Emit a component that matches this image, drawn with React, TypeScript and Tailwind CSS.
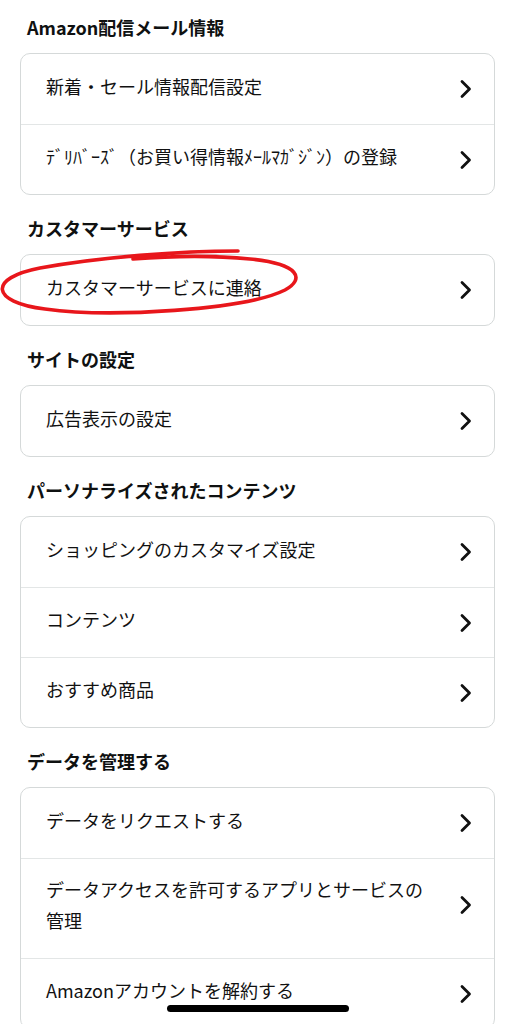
import React from "react";

const font = {
  fontFamily: '"Noto Sans CJK JP", "Noto Sans", sans-serif',
};

function Chevron() {
  return (
    <svg width="14" height="20" viewBox="0 0 14 20" className="shrink-0">
      <path d="M3 2.5 L10.5 10 L3 17.5" fill="none" stroke="#111" strokeWidth="2.8" strokeLinecap="round" strokeLinejoin="round" />
    </svg>
  );
}

function Row({ label, first, tall }: { label: string; first?: boolean; tall?: boolean }) {
  return (
    <div
      className={`flex items-center justify-between pl-[25px] pr-[21px] ${first ? "" : "border-t border-[#e3e6e6]"} ${tall ? "min-h-[100px] pt-[15px] pb-[22px]" : "h-[70px]"}`}
    >
      <div className={`max-w-[395px] text-[18px] leading-[31px] text-[#111] ${tall ? "" : "pb-[6px]"}`}>{label}</div>
      <Chevron />
    </div>
  );
}

function Section({ title, items, first }: { title: string; items: { label: string; tall?: boolean }[]; first?: boolean }) {
  return (
    <div className={first ? "" : "mt-[22px]"}>
      <h2 className="px-[7px] text-[18px] font-bold leading-[22px] text-[#0f1111] mb-[15px]">{title}</h2>
      <div className="rounded-[10px] border border-[#d5d9d9] bg-white overflow-hidden">
        {items.map((it, i) => (
          <Row key={i} label={it.label} first={i === 0} tall={it.tall} />
        ))}
      </div>
    </div>
  );
}

export default function App() {
  return (
    <div className="relative w-[515px] h-[1024px] overflow-hidden bg-white" style={font}>
      <div className="px-[20px] pt-[16px]">
        <Section
          first
          title="Amazon配信メール情報"
          items={[{ label: "新着・セール情報配信設定" }, { label: "ﾃﾞﾘﾊﾞｰｽﾞ（お買い得情報ﾒｰﾙﾏｶﾞｼﾞﾝ）の登録" }]}
        />
        <Section title="カスタマーサービス" items={[{ label: "カスタマーサービスに連絡" }]} />
        <Section title="サイトの設定" items={[{ label: "広告表示の設定" }]} />
        <Section
          title="パーソナライズされたコンテンツ"
          items={[{ label: "ショッピングのカスタマイズ設定" }, { label: "コンテンツ" }, { label: "おすすめ商品" }]}
        />
        <Section
          title="データを管理する"
          items={[
            { label: "データをリクエストする" },
            { label: "データアクセスを許可するアプリとサービスの管理", tall: true },
            { label: "Amazonアカウントを解約する" },
          ]}
        />
      </div>

      <svg className="absolute left-0 top-0 pointer-events-none" width="515" height="340" viewBox="0 0 515 340">
        <path
          d="M238 251 C 180 251, 100 257, 40 268 C -12 278, -10 302, 45 309 C 110 318, 245 310, 285 290 C 305 279, 300 264, 250 259 C 210 255, 170 256, 133 259"
          fill="none"
          stroke="#e8161b"
          strokeWidth="3.6"
          strokeLinecap="round"
        />
      </svg>

      <div className="absolute left-[167px] top-[1005px] h-[7px] w-[182px] rounded-full bg-black" />
    </div>
  );
}
